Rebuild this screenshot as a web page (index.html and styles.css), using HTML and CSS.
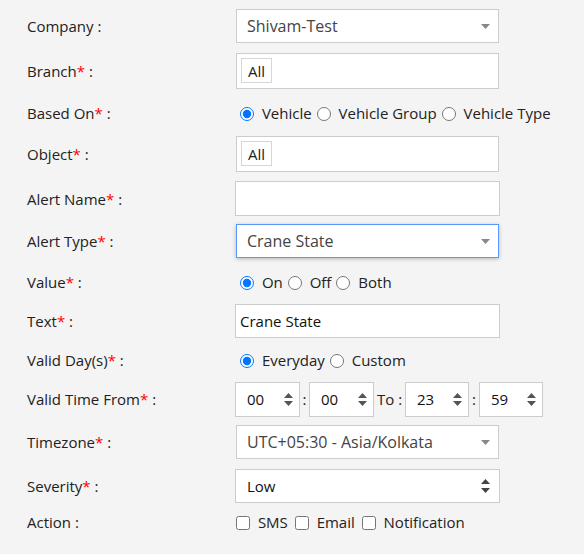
FILE: index.html
```html
<!DOCTYPE html>
<html>
<head>
<meta charset="utf-8">
<link rel="stylesheet" href="styles.css">
</head>
<body>
<div class="form">
  <div class="label">Company :</div>
  <div class="ctl"><div class="sel s1"><span>Shivam-Test</span><svg class="caret" width="9" height="5" viewBox="0 0 9 5"><path d="M0 0H9L4.5 5Z" fill="#888"/></svg></div></div>

  <div class="label">Branch<span class="req">*</span> :</div>
  <div class="ctl"><div class="multi s1"><span class="tag">All</span></div></div>

  <div class="label">Based On<span class="req">*</span> :</div>
  <div class="ctl radios"><input type="radio" name="b" checked> Vehicle<input type="radio" name="b"> Vehicle Group<input type="radio" name="b"> Vehicle Type</div>

  <div class="label">Object<span class="req">*</span> :</div>
  <div class="ctl"><div class="multi s1"><span class="tag">All</span></div></div>

  <div class="label">Alert Name<span class="req">*</span> :</div>
  <div class="ctl"><div class="inp tall"></div></div>

  <div class="label">Alert Type<span class="req">*</span> :</div>
  <div class="ctl"><div class="sel s1 focus"><span>Crane State</span><svg class="caret" width="9" height="5" viewBox="0 0 9 5"><path d="M0 0H9L4.5 5Z" fill="#888"/></svg></div></div>

  <div class="label">Value<span class="req">*</span> :</div>
  <div class="ctl radios"><input type="radio" name="v" checked> On<input type="radio" name="v"> Off<input type="radio" name="v"> Both</div>

  <div class="label">Text<span class="req">*</span> :</div>
  <div class="ctl"><div class="inp">Crane State</div></div>

  <div class="label">Valid Day(s)<span class="req">*</span> :</div>
  <div class="ctl radios"><input type="radio" name="d" checked> Everyday<input type="radio" name="d"> Custom</div>

  <div class="label">Valid Time From<span class="req">*</span> :</div>
  <div class="ctl time">
    <div class="num w65"><span>00</span><svg width="9" height="13" viewBox="0 0 9 13"><path d="M4.5 0L9 5H0Z M0 8H9L4.5 13Z" fill="#555"/></svg></div>
    <span class="colon c9">:</span>
    <div class="num w65"><span>00</span><svg width="9" height="13" viewBox="0 0 9 13"><path d="M4.5 0L9 5H0Z M0 8H9L4.5 13Z" fill="#555"/></svg></div>
    <span class="to">To :</span>
    <div class="num w64"><span>23</span><svg width="9" height="13" viewBox="0 0 9 13"><path d="M4.5 0L9 5H0Z M0 8H9L4.5 13Z" fill="#555"/></svg></div>
    <span class="colon c10">:</span>
    <div class="num w64"><span>59</span><svg width="9" height="13" viewBox="0 0 9 13"><path d="M4.5 0L9 5H0Z M0 8H9L4.5 13Z" fill="#555"/></svg></div>
  </div>

  <div class="label">Timezone<span class="req">*</span> :</div>
  <div class="ctl"><div class="sel s1"><span>UTC+05:30 - Asia/Kolkata</span><svg class="caret" width="9" height="5" viewBox="0 0 9 5"><path d="M0 0H9L4.5 5Z" fill="#888"/></svg></div></div>

  <div class="label">Severity<span class="req">*</span> :</div>
  <div class="ctl"><div class="inp nsel"><span>Low</span><svg width="9" height="14" viewBox="0 0 9 14"><path d="M4.5 0L9 5H0Z M0 9H9L4.5 14Z" fill="#444"/></svg></div></div>

  <div class="label">Action :</div>
  <div class="ctl checks"><input type="checkbox"> SMS <input type="checkbox"> Email <input type="checkbox"> Notification</div>
</div>
</body>
</html>
```

FILE: styles.css
```css
html, body {
  margin: 0;
  padding: 0;
  background: #f4f4f4;
}
body {
  font-family: "Open Sans", "Liberation Sans", sans-serif;
  font-size: 15px;
  color: #222;
}
.form {
  display: grid;
  grid-template-columns: 208px 1fr;
  grid-template-rows: 44px 46px 38px 44px 45px 40px 42px 35px 44px 34px 52px 35px 38px;
  align-items: center;
  padding: 4px 0 0 27px;
}
.label {
  line-height: 20px;
  color: #222;
}
.req {
  color: #f00;
}
.ctl {
  display: flex;
  align-items: center;
}
.s1 {
  margin-left: 1px;
}
.sel {
  box-sizing: border-box;
  width: 263px;
  height: 34px;
  background: #fff;
  border: 1px solid #ccc;
  display: flex;
  align-items: center;
  justify-content: space-between;
  padding: 0 8px 0 10px;
  font-size: 16px;
  color: #444;
}
.sel.focus {
  border-color: #5897fb;
  box-shadow: 0 1px 4px rgba(0,0,0,0.25);
}
.caret {
  margin-top: 1px;
}
.multi {
  box-sizing: border-box;
  width: 263px;
  height: 36px;
  background: #fff;
  border: 1px solid #ccc;
  display: flex;
  align-items: flex-start;
  padding: 4px 0 0 4px;
}
.tag {
  box-sizing: border-box;
  height: 25px;
  width: 31px;
  border: 1px solid #d6d6d6;
  display: flex;
  align-items: center;
  justify-content: center;
  color: #222;
  font-size: 15px;
}
.inp {
  box-sizing: border-box;
  width: 265px;
  height: 34px;
  background: #fff;
  border: 1px solid #ccc;
  display: flex;
  align-items: center;
  padding: 0 4px;
  color: #111;
}
.inp.tall {
  height: 35px;
}
.nsel {
  justify-content: space-between;
  padding: 0 9px 0 11px;
}
.radios {
  white-space: pre;
}
.radios input {
  width: 14px;
  height: 14px;
  margin: 2px 4px 0 5px;
  accent-color: #0075ff;
}
.num {
  box-sizing: border-box;
  height: 35px;
  background: #fff;
  border: 1px solid #ccc;
  display: flex;
  align-items: center;
  justify-content: space-between;
  padding: 0 6px 0 11px;
  color: #111;
}
.w65 { width: 65px; }
.w64 { width: 64px; }
.colon {
  text-align: center;
}
.c9 { width: 9px; }
.c10 { width: 10px; }
.to {
  width: 31px;
  box-sizing: border-box;
  padding: 0 0 0 3px;
  white-space: pre;
}
.checks {
  white-space: pre;
}
.checks input {
  width: 14px;
  height: 14px;
  margin: 1px 4px 0 3px;
}
.checks input:first-child {
  margin-left: 1px;
}
```
